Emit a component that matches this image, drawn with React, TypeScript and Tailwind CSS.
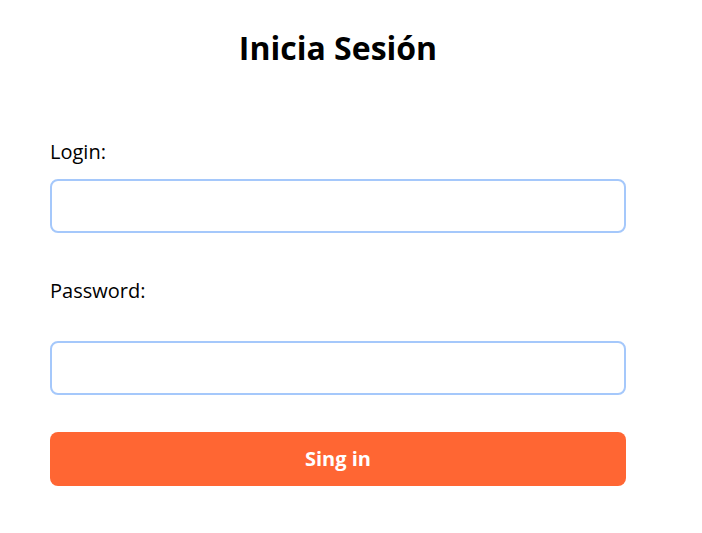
export default function App() {
  return (
    <div className="min-h-screen bg-white font-['Open_Sans',sans-serif] text-black">
      <form className="ml-[50px] flex w-[576px] flex-col pt-[25px]" onSubmit={(e) => e.preventDefault()}>
        <h1 className="text-center text-[32px] font-bold leading-[46px]">Inicia Sesión</h1>
        <label htmlFor="login" className="mt-[67px] text-[20px] leading-[28px]">
          Login:
        </label>
        <input
          id="login"
          type="text"
          className="mt-[13px] h-[54px] rounded-lg border-2 border-[#a5c8fb] px-4 outline-none"
        />
        <label htmlFor="password" className="mt-[44px] text-[20px] leading-[28px]">
          Password:
        </label>
        <input
          id="password"
          type="password"
          className="mt-[36px] h-[54px] rounded-lg border-2 border-[#a5c8fb] px-4 outline-none"
        />
        <button
          type="submit"
          className="mt-[37px] h-[54px] rounded-lg bg-[#ff6633] text-[20px] font-bold text-white"
        >
          Sing in
        </button>
      </form>
    </div>
  );
}
